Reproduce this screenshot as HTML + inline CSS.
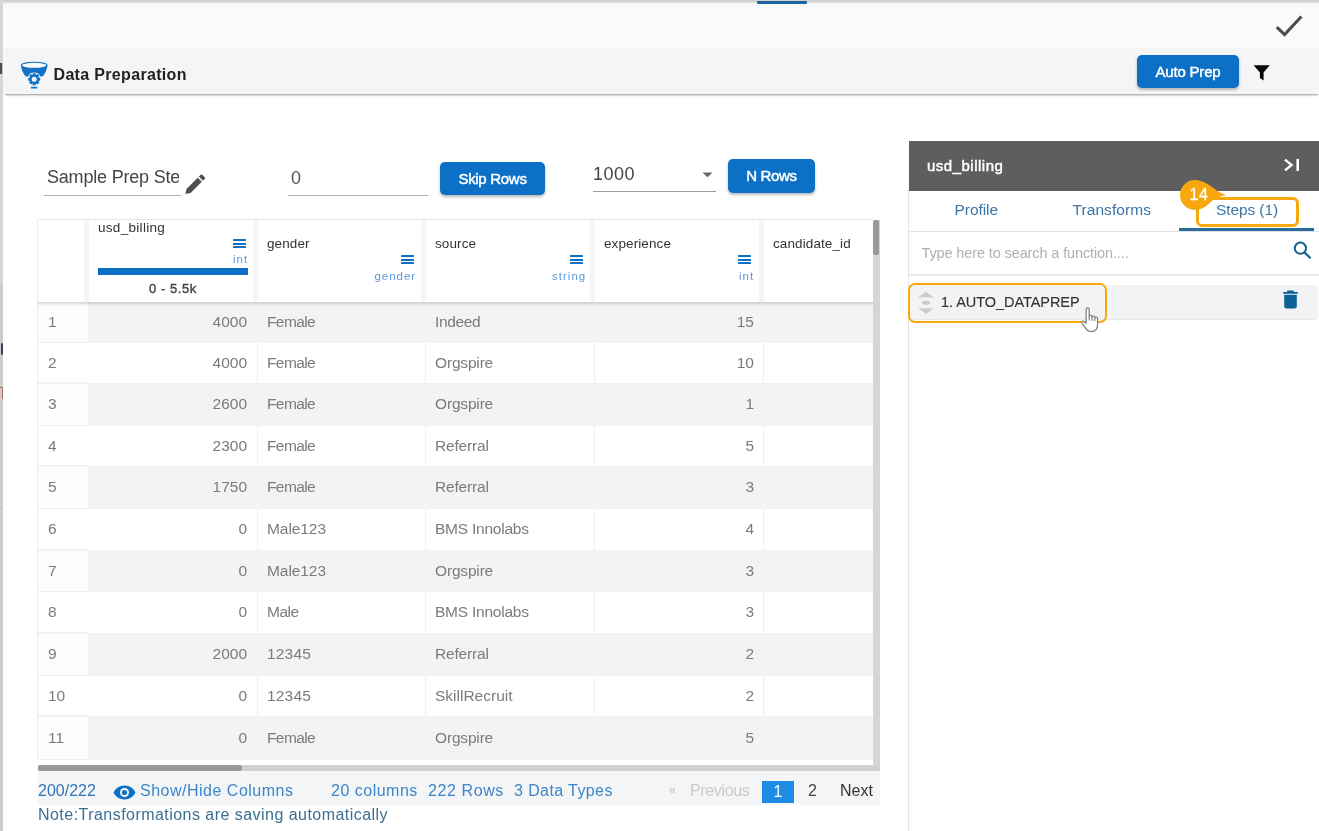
<!DOCTYPE html>
<html lang="en">
<head>
<meta charset="utf-8">
<title>Data Preparation</title>
<style>
*{box-sizing:border-box}
html,body{margin:0;padding:0}
body{width:1319px;height:831px;overflow:hidden;background:#fff;position:relative;
 font-family:"Liberation Sans",Arial,sans-serif;color:#333}
.abs{position:absolute}
.t{position:absolute;white-space:nowrap;line-height:1}
/* chrome */
#leftstrip{left:0;top:0;width:3px;height:831px;background:#cdcdcd}
#topband{left:4px;top:0;width:1315px;height:48px;background:#f9fafc}
#topline{left:0;top:0;width:1319px;height:4px;background:linear-gradient(#cfcfcf 0,#d4d4d4 50%,rgba(230,230,232,.6) 80%,rgba(249,250,252,0) 100%)}
#topblue{left:757px;top:1px;width:50px;height:3px;background:#1d63a0;border-radius:1px}
#hdr{left:4px;top:48px;width:1315px;height:46px;background:#f5f5f7;box-shadow:0 2px 2px -1px rgba(0,0,0,.42)}
.btn{position:absolute;background:#0b70c6;color:#fff;border-radius:5px;font-weight:400;font-size:15px;-webkit-text-stroke:.45px #fff;
 text-align:center;box-shadow:0 2px 3px rgba(0,0,0,.28);white-space:nowrap}
/* table */
#thead{left:38px;top:219px;width:835px;height:82px;background:#fff;border-top:1px solid #e6e6e8}
.vdiv{position:absolute;top:220px;height:82px;width:5px;background:#f5f5f7}
.hname{font-size:13.5px;color:#333;letter-spacing:.1px}
.htype{font-size:11.500px;color:#5b9bd8;letter-spacing:1px;margin-right:-1.200px;margin-top:1px}
.ham{position:absolute;width:13px;height:9px}
.ham i{position:absolute;left:0;width:13px;height:2px;background:#0b70c6;border-radius:.5px}
.row{position:absolute;left:38px;width:835px;background:#fff;font-size:15.5px;color:#7b7b7b;border-bottom:1px solid #f1f1f3}
.row.odd{background:#f3f3f5;border-bottom:0}
.c{position:absolute;top:0;height:100%;white-space:nowrap;overflow:hidden}
.c0{left:0;width:50px;background:#fff;padding-left:10px;border-bottom:1px solid #f0f0f2}
.row.odd .c0{background:#fdfdfd}
.c1{left:50px;width:169px;text-align:right;padding-right:10px}
.c2{left:219px;width:168px;padding-left:9px;border-left:1px solid #f0f0f2}
.c3{left:387px;width:169px;padding-left:9px;border-left:1px solid #f0f0f2}
.c4{left:556px;width:169px;text-align:right;padding-right:9px;border-left:1px solid #f0f0f2}
.c5{left:725px;width:110px;border-left:1px solid #f0f0f2}
.row.odd .c2,.row.odd .c3,.row.odd .c4,.row.odd .c5{border-left-color:#f6f6f8}
/* footer */
#foot{left:38px;top:771px;width:841.500px;height:33.500px;background:#f4f5f7}
.ft{font-size:16px;color:#3d86c8;top:783px}
/* panel */
#phead{left:909px;top:141px;width:410px;height:50px;background:#5e5e5e}
.tab{font-size:15.5px;color:#3a74a6;top:202px}
</style>
</head>
<body>
<div id="root" style="position:absolute;left:0;top:0;width:1319px;height:831px;will-change:transform">
<div id="topband" class="abs"></div>
<div id="topline" class="abs"></div>
<div id="topblue" class="abs"></div>
<div id="hdr" class="abs"></div>
<div id="leftstrip" class="abs"></div>
<div class="abs" style="left:0;top:57px;width:3px;height:22px;background:#cdcdcd;overflow:hidden"><span class="t" style="left:-6px;top:4px;font-size:15px;font-weight:700;color:#222">d</span></div>
<div class="abs" style="left:1px;top:343px;width:2px;height:12px;background:#35435a;border-radius:1px"></div>
<div class="abs" style="left:0;top:387px;width:3px;height:12px;border-top:1px solid #a8665c;border-right:1px solid #a8665c"></div>
<div class="abs" style="left:0;top:0;width:3px;height:282px;background:rgba(255,255,255,.18)"></div>
<div class="abs" style="left:0;top:508px;width:3px;height:1px;background:#bdbdbd"></div>

<!-- header icon -->
<svg class="abs" style="left:20px;top:61px" width="30" height="29" viewBox="0 0 30 29">
  <path d="M.9 4.400 C1.300 7.500 2.800 11.800 5.200 15 L7.800 15.800 A6.850 6.850 0 0 1 20.600 15.800 L23.200 15 C25.600 11.800 27.100 7.500 27.500 4.400 Z" fill="#0f72c5"/>
  <ellipse cx="14.200" cy="4.300" rx="12.900" ry="3.100" fill="#fdfdfe" stroke="#0f72c5" stroke-width="1.100"/>
  <g fill="#0f72c5">
    <circle cx="14.200" cy="18.200" r="4.700"/>
    <rect x="12.700" y="12.200" width="3" height="12" rx=".5"/>
    <rect x="12.700" y="12.200" width="3" height="12" rx=".5" transform="rotate(45 14.200 18.200)"/>
    <rect x="12.700" y="12.200" width="3" height="12" rx=".5" transform="rotate(90 14.200 18.200)"/>
    <rect x="12.700" y="12.200" width="3" height="12" rx=".5" transform="rotate(135 14.200 18.200)"/>
    <rect x="10.800" y="25.700" width="6.600" height="1.900" rx=".9"/>
  </g>
  <circle cx="14.200" cy="18.200" r="2.500" fill="#f5f5f7"/>
</svg>
<span class="t" style="left:53.5px;top:67px;font-size:16px;font-weight:700;color:#222;letter-spacing:.33px">Data Preparation</span>

<div class="btn" style="left:1137px;top:55px;width:102px;height:33px;line-height:34px;letter-spacing:-.2px">Auto Prep</div>
<svg class="abs" style="left:1253px;top:64px" width="18" height="18" viewBox="0 0 18 18"><path d="M.6 1.2 H16.8 L10.6 8.6 V16.6 L6.9 13.9 V8.6 Z" fill="#0a0a0a"/></svg>
<svg class="abs" style="left:1274px;top:13px" width="30" height="25" viewBox="0 0 30 25"><path d="M2.8 14.2 L10.6 21.6 L27.4 3.4" fill="none" stroke="#4b4b4b" stroke-width="3" stroke-linecap="butt" stroke-linejoin="miter"/></svg>

<!-- toolbar -->
<div class="abs" style="left:44px;top:163px;width:137px;height:33px;border-bottom:1px solid #b2b2b2"></div><div class="abs" style="left:44px;top:163px;width:135.300px;height:32px;overflow:hidden"><span class="t" style="left:3px;top:5px;font-size:18px;color:#444;letter-spacing:-.2px">Sample Prep Ste</span></div>
<svg class="abs" style="left:183.500px;top:173.300px" width="22.500" height="22.500" viewBox="0 0 24 24"><path d="M1.6 22.4 L2.6 17 L14.6 5 L19 9.400000000000002 L7 21.4 Z M15.8 3.8 L17.8 1.8 Q18.6 1 19.4 1.8 L22.2 4.6 Q23 5.4 22.2 6.2 L20.2 8.2 Z" fill="#505050"/></svg>
<div class="abs" style="left:288px;top:163px;width:140px;height:33px;border-bottom:1px solid #b2b2b2"><span class="t" style="left:3px;top:6px;font-size:18px;color:#555">0</span></div>
<div class="btn" style="left:440px;top:162px;width:105px;height:33px;line-height:33px;letter-spacing:-.3px">Skip Rows</div>
<div class="abs" style="left:593px;top:160px;width:123px;height:32px;border-bottom:1px solid #9c9c9c"><span class="t" style="left:0;top:5px;font-size:18px;color:#444;letter-spacing:.5px">1000</span>
  <svg class="abs" style="left:109px;top:12px" width="11" height="6" viewBox="0 0 11 6"><path d="M.5 .5 H10.5 L5.5 5.2 Z" fill="#666"/></svg></div>
<div class="btn" style="left:728px;top:159px;width:87px;height:34px;line-height:33px;letter-spacing:-.35px">N Rows</div>

<!-- table header -->
<div id="thead" class="abs"></div>
<div class="abs" style="left:37px;top:220px;width:1px;height:540px;background:#ececee"></div>
<div class="vdiv" style="left:84px"></div>
<div class="vdiv" style="left:253px"></div>
<div class="vdiv" style="left:421px"></div>
<div class="vdiv" style="left:590px"></div>
<div class="vdiv" style="left:759px"></div>

<span class="t hname" style="left:98px;top:221px;letter-spacing:.3px">usd_billing</span>
<div class="ham" style="left:233px;top:239px"><i style="top:0"></i><i style="top:3.5px"></i><i style="top:7px"></i></div>
<span class="t htype" style="right:1072px;top:253px">int</span>
<div class="abs" style="left:98px;top:268px;width:150px;height:7px;background:#0b70c6"></div>
<span class="t" style="left:149px;top:281.5px;font-size:13px;font-weight:400;-webkit-text-stroke:.4px #444;color:#444;letter-spacing:.55px">0 - 5.5k</span>

<span class="t hname" style="left:267px;top:237px">gender</span>
<div class="ham" style="left:401px;top:255px"><i style="top:0"></i><i style="top:3.5px"></i><i style="top:7px"></i></div>
<span class="t htype" style="right:904px;top:270px">gender</span>

<span class="t hname" style="left:435px;top:237px">source</span>
<div class="ham" style="left:570px;top:255px"><i style="top:0"></i><i style="top:3.5px"></i><i style="top:7px"></i></div>
<span class="t htype" style="right:734px;top:270px">string</span>

<span class="t hname" style="left:604px;top:237px">experience</span>
<div class="ham" style="left:738px;top:255px"><i style="top:0"></i><i style="top:3.5px"></i><i style="top:7px"></i></div>
<span class="t htype" style="right:566px;top:270px">int</span>

<span class="t hname" style="left:773px;top:237px">candidate_id</span>

<!-- rows -->
<div class="row odd" style="top:302px;height:41px;line-height:39px"><span class="c c0">1</span><span class="c c1">4000</span><span class="c c2" style="letter-spacing:-0.6px">Female</span><span class="c c3" style="letter-spacing:-0.35px">Indeed</span><span class="c c4">15</span><span class="c c5"></span></div>
<div class="row" style="top:343px;height:41px;line-height:39px"><span class="c c0">2</span><span class="c c1">4000</span><span class="c c2" style="letter-spacing:-0.6px">Female</span><span class="c c3" style="letter-spacing:-0.17px">Orgspire</span><span class="c c4">10</span><span class="c c5"></span></div>
<div class="row odd" style="top:384px;height:42px;line-height:40px"><span class="c c0">3</span><span class="c c1">2600</span><span class="c c2" style="letter-spacing:-0.6px">Female</span><span class="c c3" style="letter-spacing:-0.17px">Orgspire</span><span class="c c4">1</span><span class="c c5"></span></div>
<div class="row" style="top:426px;height:41px;line-height:39px"><span class="c c0">4</span><span class="c c1">2300</span><span class="c c2" style="letter-spacing:-0.6px">Female</span><span class="c c3" style="letter-spacing:-0.17px">Referral</span><span class="c c4">5</span><span class="c c5"></span></div>
<div class="row odd" style="top:467px;height:42px;line-height:40px"><span class="c c0">5</span><span class="c c1">1750</span><span class="c c2" style="letter-spacing:-0.6px">Female</span><span class="c c3" style="letter-spacing:-0.17px">Referral</span><span class="c c4">3</span><span class="c c5"></span></div>
<div class="row" style="top:509px;height:42px;line-height:40px"><span class="c c0">6</span><span class="c c1">0</span><span class="c c2" style="letter-spacing:-0.07px">Male123</span><span class="c c3" style="letter-spacing:-0.23px">BMS Innolabs</span><span class="c c4">4</span><span class="c c5"></span></div>
<div class="row odd" style="top:551px;height:41px;line-height:39px"><span class="c c0">7</span><span class="c c1">0</span><span class="c c2" style="letter-spacing:-0.07px">Male123</span><span class="c c3" style="letter-spacing:-0.17px">Orgspire</span><span class="c c4">3</span><span class="c c5"></span></div>
<div class="row" style="top:592px;height:42px;line-height:40px"><span class="c c0">8</span><span class="c c1">0</span><span class="c c2" style="letter-spacing:-0.48px">Male</span><span class="c c3" style="letter-spacing:-0.23px">BMS Innolabs</span><span class="c c4">3</span><span class="c c5"></span></div>
<div class="row odd" style="top:634px;height:42px;line-height:40px"><span class="c c0">9</span><span class="c c1">2000</span><span class="c c2" style="letter-spacing:0.18px">12345</span><span class="c c3" style="letter-spacing:-0.17px">Referral</span><span class="c c4">2</span><span class="c c5"></span></div>
<div class="row" style="top:676px;height:41px;line-height:39px"><span class="c c0">10</span><span class="c c1">0</span><span class="c c2" style="letter-spacing:0.18px">12345</span><span class="c c3">SkillRecruit</span><span class="c c4">2</span><span class="c c5"></span></div>
<div class="row odd" style="top:717px;height:43px;line-height:41px"><span class="c c0">11</span><span class="c c1">0</span><span class="c c2" style="letter-spacing:-0.6px">Female</span><span class="c c3" style="letter-spacing:-0.17px">Orgspire</span><span class="c c4">5</span><span class="c c5"></span></div>
<div class="abs" style="left:38px;top:302px;width:835px;height:4px;background:linear-gradient(rgba(0,0,0,.16),rgba(0,0,0,0))"></div>

<!-- scrollbars -->
<div class="abs" style="left:873px;top:220px;width:6.500px;height:551px;background:#d5d5d5"></div>
<div class="abs" style="left:873px;top:220px;width:6.300px;height:35px;background:#999;border-radius:2.500px"></div>
<div class="abs" style="left:38px;top:765px;width:841.500px;height:6.300px;background:#d0d0d0"></div>
<div class="abs" style="left:38px;top:765px;width:204px;height:6.300px;background:#999;border-radius:2px"></div>

<!-- footer -->
<div id="foot" class="abs"></div>
<span class="t ft" style="left:38px;color:#3476b8">200/222</span>
<svg class="abs" style="left:113px;top:784.500px" width="23" height="15" viewBox="0 0 23 15"><path d="M11.5 .6 C6.4 .6 2.3 3.5 .6 7.5 C2.3 11.500000000000002 6.4 14.4 11.5 14.4 C16.6 14.4 20.7 11.5 22.4 7.5 C20.7 3.5 16.6 .6 11.5 .6 Z" fill="#0b70c6"/><circle cx="11.5" cy="7.5" r="4.5" fill="#f4f5f7"/><circle cx="11.5" cy="7.5" r="2.6" fill="#0b70c6"/></svg>
<span class="t ft" style="left:140px;letter-spacing:.5px">Show/Hide Columns</span>
<span class="t ft" style="left:331px;letter-spacing:.5px">20 columns</span>
<span class="t ft" style="left:428px;letter-spacing:.6px">222 Rows</span>
<span class="t ft" style="left:514px;letter-spacing:.4px">3 Data Types</span>
<span class="t" style="left:669px;top:783px;font-size:13px;color:#c4c4c6">«</span>
<span class="t ft" style="left:690px;color:#c9cacc;letter-spacing:-.35px">Previous</span>
<div class="abs" style="left:762px;top:781px;width:32px;height:22px;background:#1e8be6;color:#fff;font-size:16px;line-height:22px;text-align:center">1</div>
<span class="t ft" style="left:808px;color:#444">2</span>
<span class="t ft" style="left:840px;color:#333">Next</span>
<span class="t" style="left:38px;top:806.500px;font-size:16px;color:#3b6f90;letter-spacing:.46px">Note:Transformations are saving automatically</span>

<!-- right panel -->
<div class="abs" style="left:908px;top:190px;width:1px;height:641px;background:#e4e4e6"></div>
<div id="phead" class="abs"></div>
<span class="t" style="left:927px;top:158px;font-size:15px;font-weight:400;-webkit-text-stroke:.45px #fff;color:#fff;letter-spacing:.5px">usd_billing</span>
<svg class="abs" style="left:1283px;top:158px" width="18" height="14" viewBox="0 0 18 14"><path d="M2 1.6 L8.6 7 L2 12.4" fill="none" stroke="#fff" stroke-width="2.4"/><rect x="13.4" y="1" width="2.6" height="12" fill="#fff"/></svg>

<div class="abs" style="left:909px;top:231px;width:410px;height:1px;background:#dfe1e4"></div>
<div class="abs" style="left:1179px;top:228.200px;width:135px;height:2.800px;background:#2b6c9c"></div>
<span class="t tab" style="left:954.5px;letter-spacing:-.05px">Profile</span>
<span class="t tab" style="left:1072.500px;letter-spacing:.07px">Transforms</span>
<span class="t tab" style="left:1216px;letter-spacing:-.1px">Steps (1)</span>
<div class="abs" style="left:1196px;top:197px;width:103px;height:30px;border:3.400px solid #f6a80c;border-radius:6px"></div>
<svg class="abs" style="left:1178px;top:178px" width="52" height="34" viewBox="0 0 52 34"><path d="M17 2 C24 2 30 6 36 10.5 C40 13.5 44 16 48.500 17.200 C44 17.600 39 19 35 22 C30 26.500 25 32 17 32 A15 15 0 0 1 17 2 Z" fill="#f6a80c"/></svg>
<span class="t" style="left:1189.500px;top:186.500px;font-size:16px;color:#fff;letter-spacing:.7px;-webkit-text-stroke:.3px #fff">14</span>

<span class="t" style="left:921.5px;top:246px;font-size:14.5px;color:#b0b0b2;letter-spacing:-.12px">Type here to search a function....</span>
<svg class="abs" style="left:1292px;top:240px" width="22" height="20" viewBox="0 0 22 20"><circle cx="8.400" cy="8.200" r="5.600" fill="none" stroke="#16608c" stroke-width="2"/><path d="M12.400 12.400 L18.600 18.200" stroke="#16608c" stroke-width="2.200" fill="none"/></svg>
<div class="abs" style="left:909px;top:273.500px;width:410px;height:2px;background:#e9e9eb"></div>

<div class="abs" style="left:909px;top:285px;width:409px;height:34px;background:#f2f3f5;border-radius:4px;box-shadow:0 1px 1px rgba(0,0,0,.10)"></div>
<div class="abs" style="left:908px;top:283px;width:199px;height:40px;border:2.200px solid #f6a80c;border-radius:7px"></div>
<svg class="abs" style="left:917px;top:291px" width="18" height="24" viewBox="0 0 18 24"><path d="M9 .8 L16.800 6.200 H1.200 Z M9 23 L16.800 17.200 H1.200 Z" fill="#cbcbcd"/><ellipse cx="9" cy="11.800" rx="4" ry="2" fill="#cbcbcd"/></svg>
<span class="t" style="left:941px;top:295px;font-size:14.5px;color:#333;letter-spacing:-.05px;-webkit-text-stroke:.12px #333">1. AUTO_DATAPREP</span>
<svg class="abs" style="left:1282px;top:289px" width="17" height="21" viewBox="0 0 17 21"><path d="M5.600 1.600 H11.400 L12.300 2.900 H15.800 V4.800 H1.200 V2.900 H4.700 Z M2.200 5.800 H14.800 V17.600 Q14.800 19.400 13 19.400 H4 Q2.200 19.400 2.200 17.600 Z" fill="#0c6496"/></svg>
<!-- hand cursor -->
<svg class="abs" style="left:1080px;top:306px" width="22" height="28" viewBox="0 0 22 28"><path d="M6.200 17.200 V3.600 Q6.200 2 7.700 2 Q9.200 2 9.200 3.600 V10.600 Q9.200 9.400 10.600 9.400 Q12 9.400 12 10.800 V11.400 Q12 10.200 13.400 10.200 Q14.800 10.200 14.800 11.600 V12.200 Q14.800 11.200 16.100 11.200 Q17.600 11.200 17.600 12.800 V18.600 Q17.600 25.600 11.400 25.600 Q7.600 25.600 5.200 21.600 L1.800 16.600 Q1.400 15.600 2.400 15.200 Q3.400 15 4.200 15.800 Z" fill="#fff" stroke="#858585" stroke-width="1.300" stroke-linejoin="round"/><path d="M9.200 10.600 V14.600 M12 11.400 V14.800 M14.800 12.200 V15" stroke="#858585" stroke-width="1.200" fill="none"/></svg>
</div>
</body>
</html>
